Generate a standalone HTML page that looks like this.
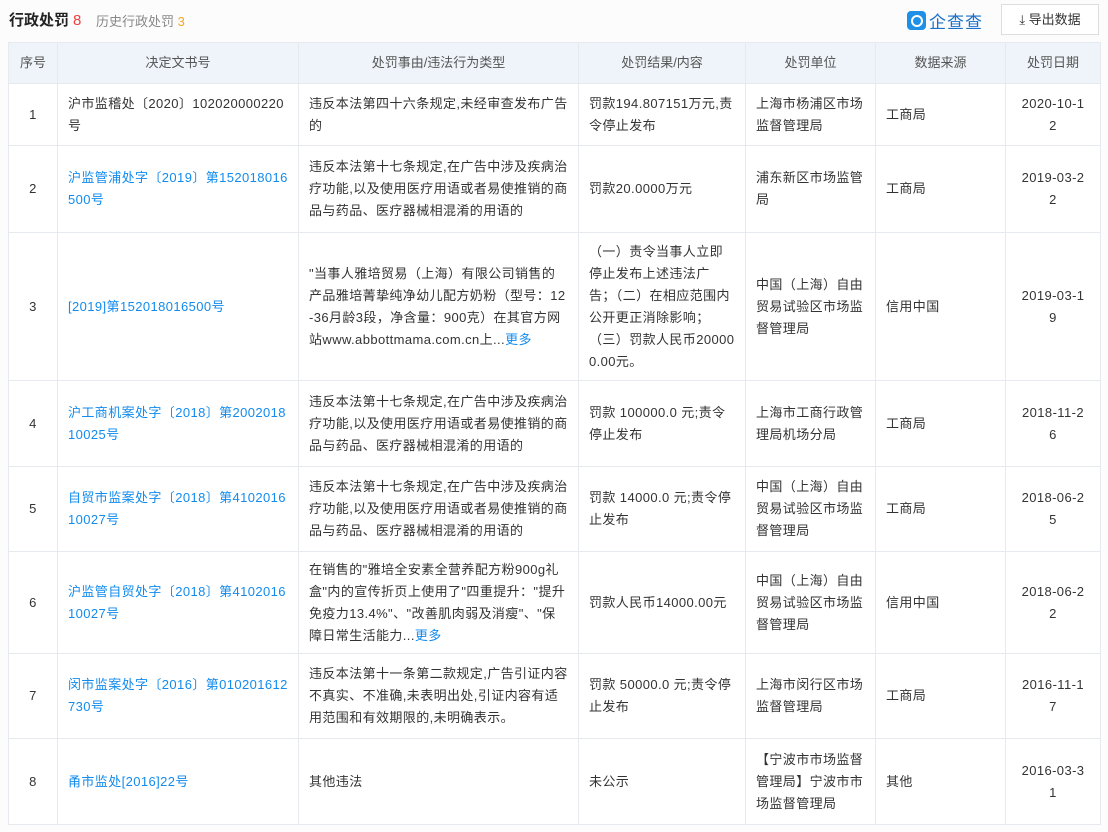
<!DOCTYPE html>
<html><head><meta charset="utf-8"><style>
body{margin:0;width:1108px;height:832px;background:#fcfcfd;font-family:"Liberation Sans","Noto Sans CJK SC",sans-serif;color:#333;overflow:hidden;position:relative}
.t1{position:absolute;left:9px;top:9px;font-size:15px;font-weight:bold;color:#222}
.t1 b{color:#f04040;font-weight:normal;margin-left:4px}
.t2{position:absolute;left:96px;top:11px;font-size:13px;color:#888}
.t2 b{color:#f5a623;font-weight:normal}
.logo{position:absolute;left:907px;top:8px;font-size:17px;color:#1a6fc9;display:flex;align-items:center;letter-spacing:1px}
.logo i{display:inline-block;width:19px;height:19px;background:#1e90e8;border-radius:4px;margin-right:3px;position:relative}
.logo i:after{content:"";position:absolute;left:4px;top:4px;width:8px;height:8px;border:2px solid #fff;border-radius:50%}
.btn{position:absolute;left:1001px;top:4px;width:96px;height:29px;border:1px solid #ddd;background:#fff;font-size:13px;line-height:29px;text-align:center;color:#333}
table{position:absolute;left:8px;top:42px;border-collapse:collapse;table-layout:fixed;font-size:13px;letter-spacing:0.4px}
td,th{border:1px solid #e6e9ee;padding:0 10px;line-height:22px;background:#fff;vertical-align:middle;word-break:break-all}
th{background:#eef4f9;font-weight:normal;color:#555;height:40px;text-align:center;letter-spacing:0}
td.c{text-align:center}
td.d{padding:0 14px}
a{color:#128bed;text-decoration:none}
</style></head><body>
<div class="t1">行政处罚<b>8</b></div>
<div class="t2">历史行政处罚 <b>3</b></div>
<div class="logo"><i></i>企查查</div>
<div class="btn">⤓ 导出数据</div>
<table>
<colgroup><col style="width:49px"><col style="width:241px"><col style="width:280px"><col style="width:167px"><col style="width:130px"><col style="width:130px"><col style="width:95px"></colgroup>
<tr><th>序号</th><th>决定文书号</th><th>处罚事由/违法行为类型</th><th>处罚结果/内容</th><th>处罚单位</th><th>数据来源</th><th>处罚日期</th></tr>
<tr style="height:62px"><td class="c">1</td><td>沪市监稽处〔2020〕102020000220号</td><td>违反本法第四十六条规定,未经审查发布广告的</td><td>罚款194.807151万元,责令停止发布</td><td>上海市杨浦区市场监督管理局</td><td>工商局</td><td class="c d">2020-10-12</td></tr>
<tr style="height:87px"><td class="c">2</td><td><a>沪监管浦处字〔2019〕第152018016500号</a></td><td>违反本法第十七条规定,在广告中涉及疾病治疗功能,以及使用医疗用语或者易使推销的商品与药品、医疗器械相混淆的用语的</td><td>罚款20.0000万元</td><td>浦东新区市场监管局</td><td>工商局</td><td class="c d">2019-03-22</td></tr>
<tr style="height:148px"><td class="c">3</td><td><a>[2019]第152018016500号</a></td><td>"当事人雅培贸易（上海）有限公司销售的产品雅培菁挚纯净幼儿配方奶粉（型号：12-36月龄3段，净含量：900克）在其官方网站www.abbottmama.com.cn上...<a>更多</a></td><td>（一）责令当事人立即停止发布上述违法广告；（二）在相应范围内公开更正消除影响；（三）罚款人民币200000.00元。</td><td>中国（上海）自由贸易试验区市场监督管理局</td><td>信用中国</td><td class="c d">2019-03-19</td></tr>
<tr style="height:86px"><td class="c">4</td><td><a>沪工商机案处字〔2018〕第200201810025号</a></td><td>违反本法第十七条规定,在广告中涉及疾病治疗功能,以及使用医疗用语或者易使推销的商品与药品、医疗器械相混淆的用语的</td><td>罚款 100000.0 元;责令停止发布</td><td>上海市工商行政管理局机场分局</td><td>工商局</td><td class="c d">2018-11-26</td></tr>
<tr style="height:85px"><td class="c">5</td><td><a>自贸市监案处字〔2018〕第410201610027号</a></td><td>违反本法第十七条规定,在广告中涉及疾病治疗功能,以及使用医疗用语或者易使推销的商品与药品、医疗器械相混淆的用语的</td><td>罚款 14000.0 元;责令停止发布</td><td>中国（上海）自由贸易试验区市场监督管理局</td><td>工商局</td><td class="c d">2018-06-25</td></tr>
<tr style="height:102px"><td class="c">6</td><td><a>沪监管自贸处字〔2018〕第410201610027号</a></td><td>在销售的"雅培全安素全营养配方粉900g礼盒"内的宣传折页上使用了"四重提升："提升免疫力13.4%"、"改善肌肉弱及消瘦"、"保障日常生活能力...<a>更多</a></td><td>罚款人民币14000.00元</td><td>中国（上海）自由贸易试验区市场监督管理局</td><td>信用中国</td><td class="c d">2018-06-22</td></tr>
<tr style="height:85px"><td class="c">7</td><td><a>闵市监案处字〔2016〕第010201612730号</a></td><td>违反本法第十一条第二款规定,广告引证内容不真实、不准确,未表明出处,引证内容有适用范围和有效期限的,未明确表示。</td><td>罚款 50000.0 元;责令停止发布</td><td>上海市闵行区市场监督管理局</td><td>工商局</td><td class="c d">2016-11-17</td></tr>
<tr style="height:86px"><td class="c">8</td><td><a>甬市监处[2016]22号</a></td><td>其他违法</td><td>未公示</td><td>【宁波市市场监督管理局】宁波市市场监督管理局</td><td>其他</td><td class="c d">2016-03-31</td></tr>
</table>
</body></html>
